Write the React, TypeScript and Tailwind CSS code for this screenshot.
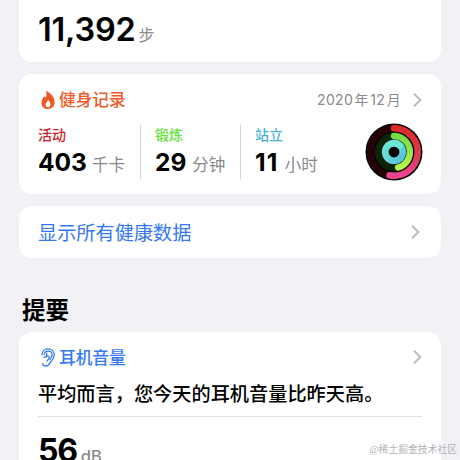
type ChevronProps = { className?: string };

function Chevron({ className }: ChevronProps) {
  return (
    <svg className={className} width="9" height="14" viewBox="0 0 9 14" fill="none">
      <path d="M1.5 1.3 7.4 7 1.5 12.7" stroke="#bcbcc0" strokeWidth="2" strokeLinecap="round" strokeLinejoin="round" />
    </svg>
  );
}

function Flame() {
  return (
    <svg width="14" height="18" viewBox="0 0 14 18">
      <path
        d="M4.900.3C4.700 0 5.100-.1 5.400.1 10 2.200 13.600 6.300 13.600 11.300c0 4-2.800 6.700-6.700 6.700S.5 15.500.5 11.900c0-2.500.9-4.300 2.200-6 .3-.4.700-.4 1 0l.6.700C5.600 5.200 6 2.700 4.900.3Z"
        fill="#ee5a26"
      />
      <path d="M7 8.900c1.500 1.400 2.400 2.900 2.400 4.500 0 1.800-.9 2.900-2.400 2.900s-2.400-1.100-2.400-2.800c0-1.700 1.900-2.500 2.400-4.600Z" fill="#fff" />
    </svg>
  );
}

function Ear() {
  return (
    <svg width="14" height="19" viewBox="0 0 14 19" fill="none" stroke="#3478ee" strokeWidth="1.300" strokeLinecap="round" strokeLinejoin="round">
      <path d="M1 6.500C1.200 3.100 3.700.8 7.100.8c3.500 0 6.100 2.500 6.100 6.100 0 2.700-1.300 4.300-3 6.200-1.500 1.700-2 4.900-5.200 4.900-1.900 0-3-.9-3.500-2.300" />
      <path d="M3.200 6.500c.3-2 1.800-3.400 3.900-3.400 2.300 0 4 1.600 4 3.900 0 2-1.100 3.300-2.300 4.600" />
      <path d="M5.700 5.400v3.400M3 9.200c1.400.1 2.300-1 3.700-1 1.600 0 2 1.400 1.100 2.500-.8.900-1.400 1.400-1.700 2.500" />
    </svg>
  );
}

function Rings() {
  return (
    <svg width="58" height="58" viewBox="0 0 58 58" fill="none" strokeLinecap="round">
      <defs>
        <linearGradient id="move" x1="0" y1="0" x2="0" y2="58" gradientUnits="userSpaceOnUse">
          <stop offset="0.080" stopColor="#d9292a" />
          <stop offset="0.550" stopColor="#dc3c50" />
          <stop offset="0.900" stopColor="#eb4590" />
        </linearGradient>
        <linearGradient id="exercise" x1="0" y1="12" x2="0" y2="46" gradientUnits="userSpaceOnUse">
          <stop stopColor="#72dc43" />
          <stop offset="1" stopColor="#b9f64d" />
        </linearGradient>
        <linearGradient id="stand" x1="18" y1="20" x2="40" y2="38" gradientUnits="userSpaceOnUse">
          <stop stopColor="#6cead0" />
          <stop offset="1" stopColor="#55bfe2" />
        </linearGradient>
      </defs>
      <circle cx="29" cy="29" r="28.500" fill="#000" />
      <circle cx="29" cy="29" r="23.700" stroke="#240306" strokeWidth="7" />
      <circle cx="29" cy="29" r="16" stroke="#102306" strokeWidth="6.500" />
      <path d="M29 5.300A23.700 23.700 0 1 1 24.500 52.270" stroke="url(#move)" strokeWidth="6.500" />
      <path d="M29 13A16 16 0 0 1 33.100 44.450" stroke="url(#exercise)" strokeWidth="6.300" />
      <circle cx="29" cy="29" r="8.800" stroke="url(#stand)" strokeWidth="6.800" />
      <path d="M26 20.700A8.800 8.800 0 0 1 35 22.600" stroke="#6ae9d4" strokeWidth="6.500" />
    </svg>
  );
}

export default function App() {
  return (
    <main className="relative h-[460px] w-[460px] overflow-hidden bg-[#f2f1f6] px-[19px] font-['Inter','Noto_Sans_CJK_SC',sans-serif]" lang="zh-CN">
      <section className="flex h-[62px] items-baseline rounded-b-[13px] bg-white px-[19px] pt-[10px]">
        <span className="text-[32.500px] leading-10 font-semibold tracking-[-0.200px] text-black">11,392</span>
        <span className="ml-[3px] text-[16px] leading-10 text-[#8a8a8e]">步</span>
      </section>

      <section className="mt-3 h-[120px] rounded-[13px] bg-white px-[19px] pt-[14px]">
        <div className="flex h-6 items-center">
          <div className="flex w-[21px] pl-[2.500px]">
            <Flame />
          </div>
          <span className="text-[16.700px] leading-6 font-medium text-[#ee5a26]">健身记录</span>
          <span className="ml-auto flex items-baseline gap-[1.500px] text-[14px] leading-6 tracking-[0.300px] text-[#8a8a8e]">
            <span>2020</span>
            <span>年</span>
            <span>12</span>
            <span>月</span>
          </span>
          <Chevron className="ml-[12px]" />
        </div>
        <div className="mt-3 flex h-[56px]">
          <div className="w-[103px] border-r border-[#d8d8dc]">
            <p className="h-[22px] text-[14px] leading-[22px] font-medium text-[#cc1d2b]">活动</p>
            <p className="flex items-baseline leading-8">
              <span className="text-[24.500px] font-bold text-black">403</span>
              <span className="ml-[5px] text-[16.500px] text-[#8a8a8e]">千卡</span>
            </p>
          </div>
          <div className="w-[100px] border-r border-[#d8d8dc] pl-[14px]">
            <p className="h-[22px] text-[14px] leading-[22px] font-medium text-[#5fe135]">锻炼</p>
            <p className="flex items-baseline leading-8">
              <span className="text-[24.500px] font-bold text-black">29</span>
              <span className="ml-[6px] text-[16.500px] text-[#8a8a8e]">分钟</span>
            </p>
          </div>
          <div className="pl-[14px]">
            <p className="h-[22px] text-[14px] leading-[22px] font-medium text-[#45b1d2]">站立</p>
            <p className="flex items-baseline leading-8">
              <span className="text-[24.500px] font-bold tracking-[1.300px] text-black">11</span>
              <span className="ml-[6px] text-[16.500px] text-[#8a8a8e]">小时</span>
            </p>
          </div>
          <div className="-mt-[1px] -mr-[1px] ml-auto">
            <Rings />
          </div>
        </div>
      </section>

      <section className="mt-3 flex h-[52px] items-center justify-between rounded-[13px] bg-white pr-[21px] pl-[19px]">
        <span className="pt-px text-[19.200px] leading-8 text-[#3478f6]">显示所有健康数据</span>
        <Chevron />
      </section>

      <h2 className="mt-[35px] ml-[3px] h-[39px] text-[23.500px] leading-9 font-bold text-black">提要</h2>

      <section className="h-[128px] rounded-t-[13px] bg-white px-[19px] pt-[13px]">
        <div className="flex h-6 items-center">
          <div className="flex w-[21px] pl-[3px]">
            <Ear />
          </div>
          <span className="pt-px text-[16.700px] leading-6 font-medium text-[#3478f6]">耳机音量</span>
          <Chevron className="ml-auto" />
        </div>
        <p className="mt-[10px] h-[37px] text-[19.200px] leading-[30px] font-medium whitespace-nowrap text-black">平均而言，您今天的耳机音量比昨天高。</p>
        <div className="flex items-baseline border-t border-[#e0e0e3] pt-[14px]">
          <span className="text-[32px] leading-10 font-bold tracking-[-1.200px] text-black">56</span>
          <span className="ml-[4px] text-[16.500px] leading-10 font-medium text-[#8a8a8e]">dB</span>
        </div>
      </section>

      <span className="absolute right-[3px] bottom-[2px] font-['Liberation_Serif','Noto_Sans_CJK_SC',serif] text-[9.800px] leading-4 text-[#b1b1b5]">@稀土掘金技术社区</span>
    </main>
  );
}
